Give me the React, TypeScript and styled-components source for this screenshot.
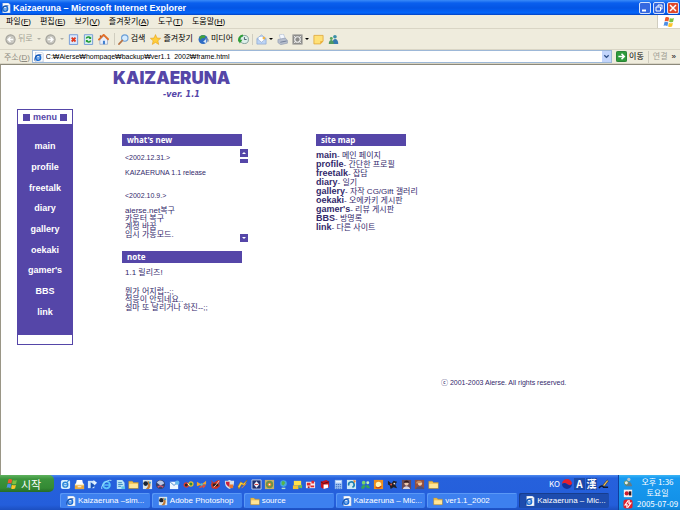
import React from "react";
import styled, { createGlobalStyle, css } from "styled-components";

const Global = createGlobalStyle`
  *, *::before, *::after { box-sizing: border-box; }
  body {
    margin: 0;
    background: #fff;
    font-family: "Liberation Sans", "Noto Sans CJK KR", sans-serif;
    font-size: 9px;
    color: #000;
  }
  button, input { font: inherit; color: inherit; }
  button { background: none; border: 0; padding: 0; }
  h1, h2, p, ul { margin: 0; padding: 0; }
  ul { list-style: none; }
`;

const purple = "#5546a8";
const narrow = `"Noto Sans CJK KR", "Liberation Sans", sans-serif`;

/* ---------- icons ---------- */

const Glyph = styled.svg<{ $size?: number }>`
  display: block;
  flex: none;
  width: ${(p) => p.$size ?? 11}px;
  height: ${(p) => p.$size ?? 11}px;
`;

const drawings: Record<string, React.ReactNode> = {
  ie: (
    <>
      <path d="M2 0h7l2 2v10H2z" fill="#fff" stroke="#8aa0c8" strokeWidth=".6" />
      <circle cx="5" cy="7" r="3" fill="none" stroke="#1c6fd6" strokeWidth="1.8" />
      <path d="M2.5 7.2h5.5" stroke="#1c6fd6" strokeWidth="1.4" />
      <path d="M1 10.5C-.5 7 4 2 9 3.4" fill="none" stroke="#163f8f" strokeWidth=".9" />
    </>
  ),
  ieBlue: (
    <>
      <circle cx="6" cy="6.5" r="3.7" fill="none" stroke="#5cc4fa" strokeWidth="2" />
      <path d="M3 6.6h6.5" stroke="#5cc4fa" strokeWidth="1.5" />
      <path d="M1 11C-1 8 6 0 11.4 1.6" fill="none" stroke="#a8e2ff" />
    </>
  ),
  iePage: (
    <>
      <rect x="1" y="1" width="10" height="10" rx="2" fill="#d7efff" />
      <circle cx="5.8" cy="6.2" r="2.7" fill="none" stroke="#2a86d8" strokeWidth="1.5" />
      <path d="M3.5 6.3h5M8 3l2-2" stroke="#2a86d8" strokeWidth="1.2" />
    </>
  ),
  back: (
    <>
      <circle cx="6" cy="6" r="5" fill="#c9c8c1" stroke="#a3a29c" strokeWidth="1.2" />
      <path d="M9 6H4M6 3.4 3.4 6 6 8.6" fill="none" stroke="#fff" strokeWidth="1.5" />
    </>
  ),
  forward: (
    <>
      <circle cx="6" cy="6" r="5" fill="#c9c8c1" stroke="#a3a29c" strokeWidth="1.2" />
      <path d="M3 6h5M6 3.4 8.6 6 6 8.6" fill="none" stroke="#fff" strokeWidth="1.5" />
    </>
  ),
  stop: (
    <>
      <path d="M1.5.8h9v10.6h-9z" fill="#dce8fc" stroke="#6f97d6" />
      <path d="m4 4 4.2 4.2M8.2 4 4 8.2" stroke="#e03a1e" strokeWidth="2" />
    </>
  ),
  refresh: (
    <>
      <path d="M1.5.8h9v10.6h-9z" fill="#dcf0ee" stroke="#6f97d6" />
      <path d="M3.6 5c.6-2 3.4-2.2 4.4-.6M8.4 7c-.6 2-3.4 2.2-4.4.6" fill="none" stroke="#1f9a32" strokeWidth="1.6" />
      <path d="M8.9 2.6v2.8H6.2zM3.1 9.4V6.6h2.7z" fill="#1f9a32" />
    </>
  ),
  home: (
    <>
      <path d="M2 6.2 6.4 2l4 4.2v5H2z" fill="#e8eefa" stroke="#8c9bbd" strokeWidth=".7" />
      <path d="M.4 6.6 6.2.9l5.4 5.4" fill="none" stroke="#e2702a" strokeWidth="2" />
      <path d="M2 1.4h1.6v2H2z" fill="#b4572b" />
      <path d="M5.4 7.4h2.2v3.8H5.4z" fill="#3d7fd0" />
    </>
  ),
  search: (
    <>
      <circle cx="7.4" cy="4.4" r="3.5" fill="#d4ecff" stroke="#6b9ed6" strokeWidth="1.2" />
      <path d="M4.8 7 1 11" stroke="#b67345" strokeWidth="1.8" strokeLinecap="round" />
    </>
  ),
  star: <path d="m6 .6 1.6 3.8 4 .3-3 2.7.9 4L6 9.2l-3.5 2.2.9-4-3-2.7 4-.3z" fill="#ffcf3c" stroke="#e39a14" strokeWidth=".6" />,
  media: (
    <>
      <circle cx="5.6" cy="6" r="5" fill="#2f6cc4" />
      <path d="M1.4 3.6C3 .8 7 .8 8.4 2.4L6.6 5 4.4 4.2 3 6.6z" fill="#43a23c" />
      <path d="M5.6 8.4 9 5.2v5z" fill="#d7e8fa" />
      <path d="M8 5.4c3-1 4.2 1 2.6 3.4" fill="none" stroke="#8a8f9c" />
    </>
  ),
  history: (
    <>
      <circle cx="7" cy="6" r="4.4" fill="#dff0ea" stroke="#7b9a96" />
      <path d="M7 3.4V6h2.4" fill="none" stroke="#345" strokeWidth=".9" />
      <path d="M1.6 8A4.6 4.6 0 0 1 5.4 1.6" fill="none" stroke="#2f9e37" strokeWidth="2.2" />
      <path d="M0 6.4h4.8L2 10.4z" fill="#2f9e37" />
    </>
  ),
  mail: (
    <>
      <path d="M1 5 6 1l5 4v6H1z" fill="#bcd4f6" stroke="#8fa9d0" strokeWidth=".8" />
      <path d="M3 3.4h6v4L6 9 3 7.2z" fill="#fff" />
      <path d="m1 5 5 4 5-4" fill="none" stroke="#8fa9d0" strokeWidth=".8" />
      <circle cx="8.6" cy="4.4" r="1.5" fill="#f0b548" />
    </>
  ),
  print: (
    <>
      <path d="M2.5 1 7 0l2 5-5 1z" fill="#f4f8ff" stroke="#a3b2cc" strokeWidth=".6" />
      <path d="m1 6 8-1.6L11.4 7v3L4 11.6 1 9.4z" fill="#b7bfce" stroke="#8793aa" strokeWidth=".6" />
      <path d="m3.6 9 7-1.4" stroke="#6d7b96" />
    </>
  ),
  edit: (
    <>
      <rect x=".5" y=".5" width="11" height="11" fill="#8d8d8b" />
      <circle cx="6" cy="6" r="3" fill="none" stroke="#eee" strokeWidth="1.3" />
      <path d="m2 2 2 2m4 4 2 2m0-8L8 4M4 8l-2 2" stroke="#eee" />
    </>
  ),
  note: (
    <>
      <path d="M1 1.5h10v6.4L8 10.8H1z" fill="#ffe177" stroke="#e0a73a" strokeWidth=".9" />
      <path d="M11 8H8v2.8z" fill="#e9a62e" />
    </>
  ),
  messenger: (
    <>
      <circle cx="7.6" cy="3" r="2" fill="#3a8fa8" />
      <path d="M4.6 10.8c0-7 6.6-7 6.6 0z" fill="#3579b0" />
      <circle cx="3.6" cy="5" r="1.6" fill="#5aa65a" />
      <path d="M.8 10.8c0-5.6 5.4-5.6 5.6 0z" fill="#4f9a63" />
    </>
  ),
  flag: (
    <>
      <path d="M2.4 1.6C3.8.8 5 1 6.2 1.8L5.4 5.6c-1.2-.8-2.4-.8-3.8-.2z" fill="#f0592b" />
      <path d="M6.9 2.1c1.4.8 2.6.6 4-.1L10.1 5.8c-1.3.7-2.7.7-4 0z" fill="#7cc242" />
      <path d="M1.4 6.3c1.3-.6 2.6-.6 3.8.2L4.4 10.2C3.2 9.4 2 9.4.6 10z" fill="#4d8fe6" />
      <path d="M5.9 6.8c1.3.7 2.6.7 4 .1L9.1 10.6c-1.3.6-2.6.6-4-.1z" fill="#fbc52c" />
    </>
  ),
  go: (
    <>
      <rect x=".5" y=".5" width="11" height="11" rx="1" fill="#2f9b3b" stroke="#1d7c2b" />
      <path d="M2.6 6h6M6 3l3 3-3 3" fill="none" stroke="#fff" strokeWidth="1.7" />
    </>
  ),
  folder: (
    <>
      <path d="M.8 2.4h4l1 1.4h5.4v6.6H.8z" fill="#f2c04c" stroke="#b98a26" strokeWidth=".5" />
      <path d="M1.4 5.2h9.4v4.6H1.4z" fill="#ffe596" />
    </>
  ),
  photoshop: (
    <>
      <path d="M1 1h10v10H1z" fill="#d9e6ee" />
      <circle cx="4" cy="5" r="2.6" fill="#1c2633" />
      <path d="M6 2c4 1 4 6 1.6 9H4c3-2 3-5 2-9z" fill="#c07b35" />
      <circle cx="8.6" cy="4" r="1.2" fill="#3aa0c8" />
    </>
  ),
  drawer: (
    <>
      <path d="M1 5h10v6H1z" fill="#f5e3b0" />
      <path d="M3 1h6l1 5H2z" fill="#fff" />
      <path d="M1 7h10v4H1z" fill="#e8a93e" />
      <path d="M4 8h4v1H4z" fill="#fff" />
    </>
  ),
  player: (
    <>
      <path d="M1 2h7v8H1z" fill="#cfe6fb" />
      <path d="M4 3.5 9 7l-5 4z" fill="#1b54b8" />
      <path d="m7 1 4 3-3 3z" fill="#e6f4ff" />
    </>
  ),
  sheet: (
    <>
      <path d="M2 1h6l2.4 3v7H2z" fill="#b9e4f7" />
      <path d="M3.5 4h4M3.5 6h5M3.5 8h3" stroke="#3a87c2" />
      <path d="M7 8h4v3H7z" fill="#61c5e8" />
    </>
  ),
  ball: (
    <>
      <circle cx="6" cy="6" r="5" fill="#37426d" />
      <path d="M2 4c3-4 7-2 8 1L6 7z" fill="#b9c7e6" />
      <path d="M3 9c2-2 4-2 6 0" stroke="#e05a6a" strokeWidth="1.5" fill="none" />
    </>
  ),
  letter: (
    <>
      <path d="M1 3h9v8H1z" fill="#eef6ff" />
      <path d="m1 3 4.5 4L10 3" fill="none" stroke="#4b86c8" />
      <circle cx="9" cy="4" r="2.4" fill="#65b7ee" />
    </>
  ),
  knot: (
    <>
      <circle cx="3.5" cy="6.5" r="2.3" fill="#2a2c30" stroke="#e23c2e" strokeWidth="1.3" />
      <circle cx="8.6" cy="5.5" r="2.3" fill="#2b8a3e" stroke="#e4c02e" strokeWidth="1.3" />
      <path d="m5 5 2 2" stroke="#fff" />
    </>
  ),
  butterfly: (
    <>
      <path d="M6 6 1 3v5zM6 6l5-4v4z" fill="#f2a52d" />
      <path d="m6 6-3 4 4-1zM6 6l5 1-3 3z" fill="#e2503b" />
      <circle cx="6" cy="6" r="1.3" fill="#4ac2d8" />
    </>
  ),
  devil: (
    <>
      <path d="M1 1 4 4l5-3 2 1-1 3 1 3-4 3-5-1-1-4 1-2z" fill="#cf3524" />
      <path d="M3 5h6v3H3z" fill="#2c1c1c" />
      <path d="m4 9 3-3 3-4" stroke="#f7d9c6" fill="none" />
    </>
  ),
  shield: (
    <>
      <path d="M1 2c4 0 4-1 5-1s1 1 5 1c0 5-1 7-5 9C2 9 1 7 1 2z" fill="#d9e0e8" />
      <path d="M2 3h4v6C3 7 2 6 2 3z" fill="#c9213b" />
      <path d="M6 6h4v4H6z" fill="#e8782f" />
    </>
  ),
  bolt: (
    <>
      <path d="m1 8 3-5 3 2 4-4-3 6-3-1-3 5z" fill="#ffd23e" stroke="#9b6a12" strokeWidth=".6" />
      <path d="m5 10 5-5" stroke="#ff8a2a" />
    </>
  ),
  gem: (
    <>
      <path d="M1 1h10v10H1z" fill="#20306e" stroke="#cbd6f2" />
      <path d="m6 2.5 3 3.5-3 3.5L3 6z" fill="#f3f5fb" />
      <path d="M4 6h4" stroke="#d03636" />
    </>
  ),
  cd: (
    <>
      <path d="M1 1h10v10H1z" fill="#c8b06a" />
      <circle cx="6" cy="6" r="4" fill="#6f9346" />
      <circle cx="6" cy="6" r="2" fill="#f08b33" />
      <circle cx="6" cy="6" r=".8" fill="#fff" />
    </>
  ),
  globe: (
    <>
      <circle cx="6" cy="5" r="3.6" fill="#46a8e0" />
      <path d="M4 3c2-2 3 0 4 1L6 7 4 6z" fill="#55b648" />
      <path d="M4 9.5h4V11H4z" fill="#b8ded0" />
    </>
  ),
  tools: (
    <>
      <path d="M2 2h8v5H2z" fill="#ffe14a" />
      <path d="M1 7h6v4H1z" fill="#f5c22d" />
      <path d="m6 9 5-3v4z" fill="#73c04d" />
    </>
  ),
  redbox: (
    <>
      <path d="M1 3h10v7H1z" fill="#f7eceb" />
      <path d="M2 4h4v3H2zM7 2h3v3H7zM6 7h4v2H6z" fill="#dd2b32" />
      <path d="M3 8h2v2H3z" fill="#b01e2a" />
    </>
  ),
  book: (
    <>
      <path d="M2 3 8 1l3 2v6l-6 2-3-2z" fill="#c8141c" />
      <path d="M5 6h5v3.6L5 11z" fill="#fff" />
      <path d="m2 3 3 2 6-2" stroke="#5b0a10" fill="none" />
    </>
  ),
  calc: (
    <>
      <path d="M2 1h8v10H2z" fill="#9fc4f4" />
      <path d="M3 2h6v2H3z" fill="#eaf4ff" />
      <path d="M3 6h6M3 8h6M3 10h6" stroke="#3d6fc4" strokeDasharray="1.5 .7" />
    </>
  ),
  sync: (
    <>
      <path d="M1 1h10v10H1z" fill="#cdeaf5" />
      <path d="M3 7a3 3 0 1 1 4 2" fill="none" stroke="#1b7fb0" strokeWidth="1.8" />
      <path d="m8 1 3 1-2 3z" fill="#f0852e" />
    </>
  ),
  leaf: (
    <>
      <circle cx="4" cy="4" r="2" fill="#7bd66a" />
      <circle cx="8.5" cy="4" r="1.6" fill="#c7f0ba" />
      <path d="M1 10c2-5 4-4 5-2 2-3 4-1 5 2H8L6 8l-2 3z" fill="#37a45a" />
    </>
  ),
  sun: (
    <>
      <path d="M1 1h10v10H1z" fill="#ef8f1c" />
      <circle cx="6" cy="6" r="3" fill="#fff4b8" />
      <path d="M3 9c2 1 4 1 6-1" stroke="#c2451a" fill="none" strokeWidth="1.5" />
    </>
  ),
  bug: (
    <>
      <path d="m1 2 4 3 2-3 4 1-2 3 2 4-4-1-3 2-1-4-2-1z" fill="#231f24" />
      <circle cx="4.5" cy="6" r="1" fill="#e5533f" />
      <circle cx="8" cy="5" r="1" fill="#e8e4e0" />
    </>
  ),
  portrait: (
    <>
      <path d="M1 1h10v10H1z" fill="#6a4a55" />
      <circle cx="6" cy="5" r="2.3" fill="#efc9ae" />
      <path d="M2 11c1-4 7-4 8 0z" fill="#d9d4e2" />
      <path d="M3 4c1-3 5-3 6 0z" fill="#32191c" />
    </>
  ),
  portraitRed: (
    <>
      <path d="M1 1h10v10H1z" fill="#94503f" />
      <circle cx="6.5" cy="5" r="2.3" fill="#f0cdb0" />
      <path d="M2 11c1-4 8-4 9 0z" fill="#49507e" />
      <path d="M2 5c1-4 5-4 7-1z" fill="#c98c5a" />
    </>
  ),
  taeguk: (
    <>
      <path d="M1 6a5 5 0 0 1 10 0c-2 2-3.5 1.2-5 0S3 4.4 1 6z" fill="#e3202f" />
      <path d="M11 6A5 5 0 0 1 1 6c2-1.6 3.5-1.2 5 0s3 2 5 0z" fill="#14329a" />
    </>
  ),
  pen: (
    <>
      <path d="m5 7 5-6 1.4 1.2L7 8z" fill="#f0c04b" stroke="#2a2a30" strokeWidth=".6" />
      <path d="M1 10c2-3 4-3 5-1h5" fill="none" stroke="#101830" strokeWidth="1.6" />
    </>
  ),
  trayUser: (
    <>
      <circle cx="7" cy="3" r="2" fill="#b7c2c8" />
      <path d="M3 11c0-7 7-7 8 0z" fill="#647c88" />
      <circle cx="4" cy="7" r="2.4" fill="#e6ebee" stroke="#5e8b54" />
    </>
  ),
  trayRed: (
    <>
      <path d="M1 2h10v9H1z" fill="#fbf1f1" />
      <circle cx="4.5" cy="6.5" r="2.5" fill="#cf1b2c" />
      <path d="M7 4h3v5H7z" fill="#2b1a20" />
    </>
  ),
  trayBolt: (
    <>
      <rect x=".5" y=".5" width="11" height="11" rx="3" fill="#e2202a" />
      <path d="M6.5 1.5 2.5 7H5l-.6 3.5M7.6 1.5 7 5h2.5l-4 5.5" fill="none" stroke="#fff" strokeWidth="1.4" />
    </>
  ),
};

const Icon = ({ name, size }: { name: string; size?: number }) => (
  <Glyph viewBox="0 0 12 12" $size={size} aria-hidden="true">
    {drawings[name]}
  </Glyph>
);

/* ---------- browser chrome ---------- */

const Screen = styled.div`
  display: flex;
  flex-direction: column;
  min-height: 100vh;
`;

const TitleBar = styled.header`
  display: flex;
  align-items: center;
  gap: 2px;
  height: 15px;
  padding: 0 1px;
  background: linear-gradient(#3a8bf8 0, #0a5fee 3px, #0455e4 8px, #0466fb 13px, #0340c0 15px);
  color: #fff;
  font-weight: bold;
  white-space: nowrap;
`;

const WindowTitle = styled.span`
  flex: 1;
`;

const WindowButton = styled.button<{ $danger?: boolean }>`
  display: grid;
  place-items: center;
  width: 12px;
  height: 12px;
  border: 1px solid #d4e2fb;
  border-radius: 2px;
  background: ${(p) => (p.$danger ? "#e0492b" : "#3568e0")};
`;

const Bar = styled.div<{ $height: number }>`
  display: flex;
  align-items: center;
  height: ${(p) => p.$height}px;
  background: #efecdd;
  border-bottom: 1px solid #d9d5c5;
  white-space: nowrap;
`;

const MenuItems = styled.nav`
  display: flex;
  flex: 1;
  gap: 9px;
  padding-left: 6px;
`;

const TextButton = styled.button<{ $muted?: boolean }>`
  display: flex;
  align-items: center;
  gap: 2px;
  font-size: 8px;
  line-height: 12px;
  color: ${(p) => (p.$muted ? "#a09e94" : "#000")};
`;

const FlagBox = styled.div`
  display: grid;
  place-items: center;
  align-self: stretch;
  width: 23px;
  background: #fff;
  border-left: 1px solid #d0cdbf;
`;

const ToolGroup = styled.div<{ $gap: number; $pad?: number }>`
  display: flex;
  align-items: center;
  gap: ${(p) => p.$gap}px;
  padding: 0 ${(p) => p.$pad ?? 4}px;
  & + & { border-left: 1px solid #d0cdbf; }
`;

const Caret = styled.i<{ $muted?: boolean }>`
  border: 2px solid transparent;
  border-top-color: ${(p) => (p.$muted ? "#b0aea4" : "#000")};
  border-bottom: 0;
`;

const AddressLabel = styled.label`
  padding: 0 2px 0 4px;
  font-size: 8px;
  color: #8c8a80;
`;

const AddressBox = styled.div`
  display: flex;
  flex: 1;
  align-items: center;
  gap: 2px;
  height: 13px;
  padding-left: 1px;
  background: #fff;
  border: 1px solid #9db8d8;
`;

const AddressInput = styled.input`
  flex: 1;
  min-width: 0;
  height: 11px;
  padding: 0;
  border: 0;
  outline: 0;
  background: none;
  font-size: 7px;
`;

const DropButton = styled.button`
  display: grid;
  place-items: center;
  width: 9px;
  height: 11px;
  background: #c3d5fb;
`;

/* ---------- page ---------- */

const Viewport = styled.main`
  display: flex;
  flex: 1;
  align-items: flex-start;
  border-left: 1px solid #9a9686;
  border-top: 1px solid #8c897b;
  background: #fff;
`;

const Sidebar = styled.aside`
  flex: none;
  width: 56px;
  margin: 44px 0 0 16px;
  border: 1px solid ${purple};
`;

const SidebarHead = styled.h2`
  display: flex;
  align-items: center;
  justify-content: center;
  gap: 3px;
  height: 14px;
  font-size: 9px;
  color: ${purple};
`;

const Square = styled.i`
  width: 7px;
  height: 7px;
  background: ${purple};
`;

const SidebarList = styled.ul`
  display: flex;
  flex-direction: column;
  min-height: 211px;
  padding: 12px 0 13px;
  background: ${purple};
`;

const SidebarItem = styled.li`
  display: grid;
  flex: 1;
  place-items: center;
`;

const SidebarLink = styled.a`
  font-weight: bold;
  line-height: 12px;
  color: #fff;
  text-decoration: none;
`;

const SidebarFoot = styled.div`
  height: 9px;
`;

const Body = styled.div`
  flex: 1;
  padding: 4px 0 0 40px;
`;

const Masthead = styled.header`
  display: flex;
  flex-direction: column;
  width: 122px;
  color: ${purple};
`;

const SiteTitle = styled.h1`
  font: 900 17px/18px Inter, "Liberation Sans", sans-serif;
  white-space: nowrap;
`;

const Version = styled.p`
  padding: 2px 0 0 50px;
  font: italic bold 8px/12px "DejaVu Sans", sans-serif;
`;

const Columns = styled.div`
  display: flex;
  gap: 68px;
  padding: 33px 0 0 9px;
`;

const Column = styled.div<{ $width: number }>`
  width: ${(p) => p.$width}px;
`;

const BarTitle = styled.h2<{ $width: number }>`
  width: ${(p) => p.$width}px;
  padding-left: 5px;
  background: ${purple};
  color: #fff;
  font: bold 8px/12px "Noto Sans", sans-serif;
`;

const inkText = css`
  font-size: 8px;
  line-height: 8px;
  color: #33296b;
  white-space: nowrap;
`;

const News = styled.div`
  display: flex;
  justify-content: space-between;
  height: 93px;
  margin: 3px 0 9px;
`;

const NewsText = styled.div`
  padding: 5px 0 0 3px;
  ${inkText}
`;

const Line = styled.p<{ $small?: boolean; $gap?: number }>`
  font-size: ${(p) => (p.$small ? 7 : 8)}px;
  margin-top: ${(p) => p.$gap ?? 0}px;
`;

const ScrollTrack = styled.div`
  display: flex;
  flex-direction: column;
  width: 8px;
`;

const ScrollButton = styled.button`
  display: grid;
  place-items: center;
  width: 8px;
  height: 8px;
  background: ${purple};
`;

const ScrollArrow = styled.i<{ $up?: boolean }>`
  border: 2px solid transparent;
  ${(p) => (p.$up ? "border-bottom-color: #fff; border-top: 0;" : "border-top-color: #fff; border-bottom: 0;")}
`;

const ScrollThumb = styled.div`
  height: 4px;
  margin: 2px 0 auto;
  background: ${purple};
`;

const NoteText = styled.div`
  padding: 6px 0 0 3px;
  ${inkText}
`;

const SiteList = styled.ul`
  padding-top: 5px;
  ${inkText}
  line-height: 9px;
`;

const SiteName = styled.a`
  font-size: 9px;
  font-weight: bold;
  color: inherit;
  text-decoration: none;
`;

const Copyright = styled.footer`
  padding: 66px 0 0 328px;
  font-size: 7px;
  line-height: 10px;
  color: #33296b;
  white-space: nowrap;
`;

/* ---------- taskbar ---------- */

const Taskbar = styled.footer`
  display: flex;
  height: 35px;
  background: linear-gradient(#4f8bf0 0, #2661dc 3px, #245edb 30px, #1c4fc0 35px);
  color: #fff;
`;

const StartButton = styled.button`
  display: flex;
  align-items: center;
  gap: 3px;
  width: 54px;
  height: 17px;
  padding-left: 6px;
  border-radius: 0 5px 5px 0;
  background: linear-gradient(#5fb35f, #3c943c 4px, #348a34 13px, #256b28);
  color: #fff;
  font-size: 11px;
`;

const TaskRows = styled.div`
  display: flex;
  flex: 1;
  flex-direction: column;
  padding: 0 9px 0 6px;
`;

const QuickRow = styled.div`
  display: flex;
  align-items: center;
  justify-content: space-between;
  height: 18px;
`;

const QuickLaunch = styled.div`
  display: flex;
  justify-content: space-between;
  width: 379px;
`;

const Language = styled.div`
  display: flex;
  align-items: center;
  gap: 1px;
  font: 8px/12px ${narrow};
`;

const LangKey = styled.button`
  width: 11px;
  height: 12px;
  background: #1c4aa8;
  color: #fff;
  font-size: 10px;
  font-weight: bold;
  line-height: 12px;
`;

const TaskList = styled.div`
  display: grid;
  grid-template-columns: repeat(6, 1fr);
  gap: 2px;
  height: 15px;
`;

const TaskButton = styled.button<{ $active?: boolean }>`
  display: flex;
  align-items: center;
  gap: 2px;
  padding-left: 6px;
  border-radius: 2px;
  background: ${(p) => (p.$active ? "#1d4cae" : "#3d80ef")};
  box-shadow: inset 1px 1px 0 ${(p) => (p.$active ? "#173d8e" : "#5a98f6")};
  color: #fff;
  font-size: 8px;
  white-space: nowrap;
`;

const Tray = styled.div`
  display: flex;
  align-items: center;
  gap: 4px;
  width: 62px;
  padding-left: 4px;
  border-left: 1px solid #0e3f9e;
  background: linear-gradient(#3cb6f6 0, #189af0 3px, #128fe6 32px, #0f7fd0 35px);
`;

const TrayIcons = styled.div`
  display: grid;
  gap: 1px;
`;

const Clock = styled.time`
  font: 8px/11px ${narrow};
  text-align: center;
  white-space: nowrap;
`;

/* ---------- data ---------- */

const menus = [
  ["파일", "F"],
  ["편집", "E"],
  ["보기", "V"],
  ["즐겨찾기", "A"],
  ["도구", "T"],
  ["도움말", "H"],
];

const sections = [
  ["main", "메인 페이지"],
  ["profile", "간단한 프로필"],
  ["freetalk", "잡담"],
  ["diary", "일기"],
  ["gallery", "자작 CG/Gift 갤러리"],
  ["oekaki", "오에카키 게시판"],
  ["gamer's", "리뷰 게시판"],
  ["BBS", "방명록"],
  ["link", "다른 사이트"],
];

const quick = [
  "iePage", "drawer", "player", "ieBlue", "sheet", "folder", "photoshop", "ball", "letter", "knot",
  "butterfly", "devil", "shield", "bolt", "gem", "cd", "globe", "tools", "redbox", "book",
  "calc", "sync", "leaf", "sun", "bug", "portrait", "portraitRed", "folder",
];

const tasks = [
  ["ie", "Kaizaeruna –sim..."],
  ["photoshop", "Adobe Photoshop"],
  ["folder", "source"],
  ["ie", "Kaizaeruna – Mic..."],
  ["folder", "ver1.1_2002"],
  ["ie", "Kaizaeruna – Mic..."],
];

export default function App() {
  return (
    <Screen>
      <Global />
      <TitleBar>
        <Icon name="ie" size={10} />
        <WindowTitle>Kaizaeruna – Microsoft Internet Explorer</WindowTitle>
        <WindowButton aria-label="최소화">
          <Glyph viewBox="0 0 10 10" $size={10}><path d="M2 7.5h4" stroke="#fff" strokeWidth="2" /></Glyph>
        </WindowButton>
        <WindowButton aria-label="이전 크기로">
          <Glyph viewBox="0 0 10 10" $size={10}>
            <path d="M4 3.5V2h4v4H6.5M2 4h4.5v4H2z" fill="none" stroke="#fff" />
          </Glyph>
        </WindowButton>
        <WindowButton $danger aria-label="닫기">
          <Glyph viewBox="0 0 10 10" $size={10}><path d="m2 2 6 6M8 2 2 8" stroke="#fff" strokeWidth="1.5" /></Glyph>
        </WindowButton>
      </TitleBar>

      <Bar $height={14}>
        <MenuItems>
          {menus.map(([label, key]) => (
            <TextButton key={key}>
              <span>{label}(<u>{key}</u>)</span>
            </TextButton>
          ))}
        </MenuItems>
        <FlagBox><Icon name="flag" size={12} /></FlagBox>
      </Bar>

      <Bar $height={21}>
        <ToolGroup $gap={4} $pad={5}>
          <TextButton $muted><Icon name="back" />뒤로</TextButton>
          <Caret $muted />
          <TextButton aria-label="앞으로"><Icon name="forward" /></TextButton>
          <Caret $muted />
          <TextButton aria-label="중지"><Icon name="stop" /></TextButton>
          <TextButton aria-label="새로 고침"><Icon name="refresh" /></TextButton>
          <TextButton aria-label="홈"><Icon name="home" /></TextButton>
        </ToolGroup>
        <ToolGroup $gap={5} $pad={3}>
          <TextButton><Icon name="search" />검색</TextButton>
          <TextButton><Icon name="star" />즐겨찾기</TextButton>
          <TextButton><Icon name="media" />미디어</TextButton>
          <TextButton aria-label="목록"><Icon name="history" /></TextButton>
        </ToolGroup>
        <ToolGroup $gap={4} $pad={3}>
          <TextButton aria-label="메일"><Icon name="mail" /><Caret /></TextButton>
          <TextButton aria-label="인쇄"><Icon name="print" /></TextButton>
          <TextButton aria-label="편집"><Icon name="edit" /><Caret /></TextButton>
          <TextButton aria-label="메모"><Icon name="note" /></TextButton>
          <TextButton aria-label="메신저"><Icon name="messenger" /></TextButton>
        </ToolGroup>
      </Bar>

      <Bar $height={14}>
        <AddressLabel htmlFor="address">주소(<u>D</u>)</AddressLabel>
        <AddressBox>
          <Icon name="ie" size={10} />
          <AddressInput id="address" defaultValue="C:₩Aierse₩hompage₩backup₩ver1.1_2002₩frame.html" />
          <DropButton aria-label="주소 목록">
            <Glyph viewBox="0 0 8 8" $size={7}><path d="M1.5 2.5 4 5l2.5-2.5" fill="none" stroke="#2f4f86" strokeWidth="1.5" /></Glyph>
          </DropButton>
        </AddressBox>
        <ToolGroup $gap={4}>
          <TextButton><Icon name="go" />이동</TextButton>
        </ToolGroup>
        <ToolGroup $gap={4}>
          <TextButton $muted>연결</TextButton>
          <TextButton>»</TextButton>
        </ToolGroup>
      </Bar>

      <Viewport>
        <Sidebar>
          <SidebarHead><Square />menu<Square /></SidebarHead>
          <SidebarList>
            {sections.map(([name]) => (
              <SidebarItem key={name}><SidebarLink href="#">{name}</SidebarLink></SidebarItem>
            ))}
          </SidebarList>
          <SidebarFoot />
        </Sidebar>

        <Body>
          <Masthead>
            <SiteTitle>KAIZAERUNA</SiteTitle>
            <Version>-ver. 1.1</Version>
          </Masthead>

          <Columns>
            <Column $width={126}>
              <BarTitle $width={120}>what's new</BarTitle>
              <News>
                <NewsText>
                  <Line $small>&lt;2002.12.31.&gt;</Line>
                  <Line $small $gap={7}>KAIZAERUNA 1.1 release</Line>
                  <Line $small $gap={15}>&lt;2002.10.9.&gt;</Line>
                  <Line $gap={7}>aierse.net복구</Line>
                  <Line>카운터 복구</Line>
                  <Line>계정 바꿈</Line>
                  <Line>임시 가동모드.</Line>
                </NewsText>
                <ScrollTrack>
                  <ScrollButton aria-label="위로"><ScrollArrow $up /></ScrollButton>
                  <ScrollThumb />
                  <ScrollButton aria-label="아래로"><ScrollArrow /></ScrollButton>
                </ScrollTrack>
              </News>
              <BarTitle $width={120}>note</BarTitle>
              <NoteText>
                <Line>1.1 릴리즈!</Line>
                <Line $gap={11}>뭔가 어지럽--;;</Line>
                <Line>적응이 안되네요..</Line>
                <Line>설마 또 날리거나 하진--;;</Line>
              </NoteText>
            </Column>

            <Column $width={120}>
              <BarTitle $width={90}>site map</BarTitle>
              <SiteList>
                {sections.map(([name, text]) => (
                  <li key={name}><SiteName href="#">{name}</SiteName>- {text}</li>
                ))}
              </SiteList>
            </Column>
          </Columns>

          <Copyright>ⓒ 2001-2003 Aierse. All rights reserved.</Copyright>
        </Body>
      </Viewport>

      <Taskbar>
        <StartButton><Icon name="flag" size={12} />시작</StartButton>
        <TaskRows>
          <QuickRow>
            <QuickLaunch>
              {quick.map((name, i) => <Icon key={i} name={name} />)}
            </QuickLaunch>
            <Language>
              <span>KO</span>
              <Icon name="taeguk" size={12} />
              <LangKey>A</LangKey>
              <LangKey>漢</LangKey>
              <Icon name="pen" />
            </Language>
          </QuickRow>
          <TaskList>
            {tasks.map(([icon, label], i) => (
              <TaskButton key={i} $active={i === 5}>
                <Icon name={icon} size={10} />
                {label}
              </TaskButton>
            ))}
          </TaskList>
        </TaskRows>
        <Tray>
          <TrayIcons>
            <Icon name="trayUser" size={10} />
            <Icon name="trayRed" size={10} />
            <Icon name="trayBolt" size={10} />
          </TrayIcons>
          <Clock>오후 1:36<br />토요일<br />2005-07-09</Clock>
        </Tray>
      </Taskbar>
    </Screen>
  );
}
